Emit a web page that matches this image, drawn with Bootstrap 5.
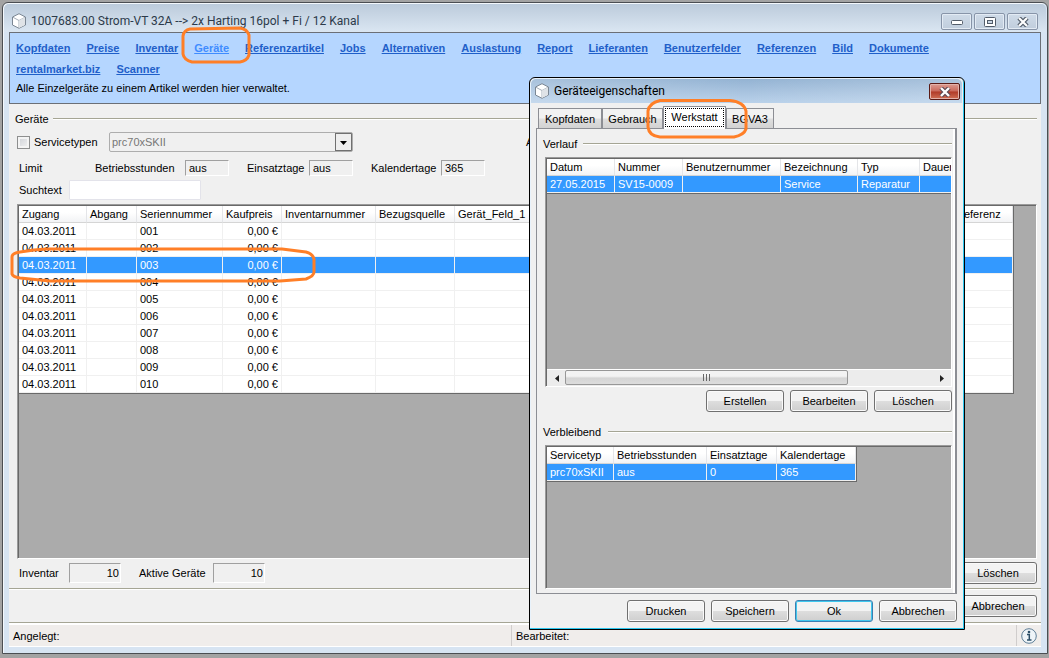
<!DOCTYPE html>
<html lang="de">
<head>
<meta charset="utf-8">
<meta name="viewport" content="width=device-width, initial-scale=1">
<title>1007683.00 Strom-VT 32A</title>
<link rel="stylesheet" href="https://cdn.jsdelivr.net/npm/bootstrap@5.3.0/dist/css/bootstrap.min.css">
<style>
  :root { --face:#f0f0f0; --frame:#d7e4f2; --hl:#3399ff; --mark-ink:#ff7f27; }
  body { background:#a3a3a3; color:#000; font:11px/16px "Liberation Sans", Arial, sans-serif; padding:2px 1px 4px 2px; }
  button, input, select { font:inherit; color:inherit; }
  .cap-font { font-family:Roboto, "Noto Sans", sans-serif; font-size:12px; }

  /* window frame */
  .win { background:var(--frame); border:1px solid #4b4e52; border-radius:6px 6px 0 0; padding:0 6px 6px; box-shadow:inset 1px 1px 0 #f4f8fc; }
  .win-title { height:28px; background:linear-gradient(#bccbdb,#dae6f2); margin:1px -5px 0; padding:5px 4px 0 7px; color:#2c3a4a; border-radius:5px 5px 0 0; }
  .cap-btns { column-gap:2px; }
  .cap-btn { width:31px; height:17px; padding:0; border:1px solid #8794a8; border-radius:2px; background:linear-gradient(#cfdbe8,#c0cddc); box-shadow:inset 0 0 0 1px #e3ebf4; display:flex; align-items:center; justify-content:center; }
  .links-panel { background:#b5d6ff; border:1px solid #6b6f76; padding:5px 6px; height:72px; }
  .links-row { column-gap:16px; padding-right:24px; }
  .links-panel a { color:#1f5fc9; font-weight:bold; line-height:21px; }
  .links-panel a.current { color:#3f8cff; }
  .client { background:var(--face); }
  .area { padding:7px 4px 0 8px; }

  .group-title { margin-left:-2px; }
  .group-line { height:2px; background:#a5a594; border-bottom:1px solid #fff; }
  .row-service { margin-top:5px; }
  .chk { appearance:none; width:13px; height:13px; margin:0; border:1px solid #8e8f8f; background:linear-gradient(135deg,#cdd0d5,#f4f4f4); box-shadow:inset 0 0 0 2px #f4f4f4; }
  .combo { width:244px; height:20px; padding:0 2px; border:1px solid #adadad; border-radius:2px; background:#f0f0f0 url("data:image/svg+xml,%3Csvg xmlns='http://www.w3.org/2000/svg' width='17' height='18'%3E%3Crect x='.5' y='.5' width='16' height='17' fill='%23eee' stroke='%23707070'/%3E%3Cpath d='M5 8h7l-3.500 4z' fill='%23000'/%3E%3C/svg%3E") no-repeat right center; color:#777; opacity:1; appearance:none; line-height:16px; }
  .sunk { width:44px; height:16px; padding:0 3px; border:1px solid; border-color:#a0a0a0 #fff #fff #a0a0a0; background:var(--face); border-radius:0; }
  .sunk-num { width:52px; height:20px; padding:0 1px; text-align:right; }
  .search { width:132px; height:20px; border:1px solid #e3e3ea; background:#fff; padding:0 3px; border-radius:1px; }
  .w-lab { width:76px; } .w-tage { width:62px; } .w-kal { width:70px; }

  .grid-box { background:#ababab; border:1px solid; border-color:#9a9a9a #fff #fff #9a9a9a; box-shadow:inset 1px 1px 0 #696969; padding:1px 0 0 1px; }
  .data { table-layout:fixed; border-collapse:separate; border-spacing:0; line-height:16px; border-right:1px solid #696969; border-bottom:1px solid #696969; background:#fff; }
  .data th { font-weight:normal; height:17px; padding:0 0 0 3px; background:linear-gradient(#fff 40%,#f2f3f5); border-bottom:1px solid #d5d5d5; border-right:1px solid #e4e5e8; white-space:nowrap; overflow:hidden; line-height:15px; }
  .data td { height:17px; padding:0 3px; border-right:1px solid #f0f0f0; border-bottom:1px solid #f0f0f0; white-space:nowrap; overflow:hidden; }
  .data tr.sel td { background:var(--hl); color:#fff; }
  .c50{width:50px}.c59{width:59px}.c60{width:60px}.c62{width:62px}.c67{width:67px}.c68{width:68px}.c70{width:70px}.c77{width:77px}.c79{width:79px}.c86{width:86px}.c93{width:93px}.c94{width:94px}.c98{width:98px}
  .main-data { width:calc(100% - 22px); }

  .push { width:78px; height:22px; padding:0; border:1px solid #707070; border-radius:3px; background:linear-gradient(#f3f3f3 48%,#dddddd 52%,#cfcfcf); box-shadow:inset 0 0 0 1px #fafafa; line-height:18px; }
  .push-default { border-color:#3c7fb1; box-shadow:inset 0 0 0 1px #3fc8ee; }
  .row-count { padding-top:3px; }
  .etch { height:2px; flex:none; background:#a5a594; border-bottom:1px solid #fff; }
  .row-cancel { padding:5px 4px; }
  .status { height:23px; background:#f0edeb; border-bottom:1px solid #fff; border-top:1px solid #fff; }
  .status > div { line-height:22px; }
  .sep { border-left:1px solid #d0cdcc; }

  /* dialog floats over the article window */
  .dlg { position:absolute; top:77px; right:84px; width:436px; border:1px solid #000; border-radius:6px 6px 0 0; background:var(--face); box-shadow:inset -1px -1px 0 #2cc6ee, inset 1px 1px 0 #e8f2fb; padding:0 7px 7px 6px; z-index:5; }
  .dlg-title { height:24px; margin:1px -5px 0; padding:4px 2px 0 3px; background:linear-gradient(90deg,#ffffff30,#ffffff00 50%,#ffffff30),linear-gradient(#94b3d3,#b9d1ea); border-radius:5px 5px 0 0; }
  .dlg-close { border-color:#5a1a15; background:linear-gradient(#dc9c92,#c9685a 48%,#b03a28 52%,#cf6f55); box-shadow:inset 0 0 0 1px #e3b2aa; }
  .tabs { padding:4px 0 0 2px; height:25px; }
  .tab { border:1px solid #8c8e94; border-bottom:0; background:linear-gradient(#f2f2f2 48%,#dfdfdf 52%,#d2d2d2); height:20px; padding:0; line-height:18px; }
  .tab.on { background:#fff; height:23px; margin-bottom:-1px; padding:1px 1px 2px; line-height:16px; z-index:1; }
  .tab.on > span { display:block; outline:1px dotted #000; outline-offset:-1px; height:19px; line-height:18px; }
  .page { border:1px solid #8c8e94; border-right:2px solid #8c8e94; background:var(--face); box-shadow:inset -2px 0 0 #fff; padding:7px 3px 4px 8px; }
  .lab-verlauf { width:40px; } .lab-rest { width:65px; }
  .box-history { height:230px; margin-top:5px; }
  .box-rest { height:144px; margin-top:5px; }
  .btn-row { gap:6px; margin-top:3px; }
  .row-rest { margin-top:12px; }
  .sb { height:17px; background:#ececec; border-top:1px solid #fff; }
  .sb-end { width:18px; display:flex; align-items:center; justify-content:center; }
  .thumb { width:283px; height:15px; border:1px solid #979797; border-radius:2px; background:linear-gradient(#f3f3f3 40%,#d5d5d5 55%,#dcdcdc); display:flex; align-items:center; justify-content:center; }

  /* hand-drawn highlights */
  .ring { position:absolute; pointer-events:none; fill:none; stroke:var(--mark-ink); stroke-width:3; stroke-linejoin:round; overflow:visible; z-index:4; }
  .ring-nav { left:-12px; top:-11px; }
  .ring-row { left:-7px; top:44px; }
  .ring-tab { left:-18px; top:-8px; }
</style>
</head>
<body class="vh-100 position-relative overflow-hidden">

<main class="win d-flex flex-column h-100">
  <header class="win-title d-flex cap-font">
    <svg width="16" height="16" viewBox="0 0 16 16" class="me-1 mt-1 flex-shrink-0"><path d="M8 .7 14.500 4v8L8 15.300 1.500 12V4z" fill="#fff" stroke="#7b8794"/><path d="M2 4.300 8 7.500l6-3.200M8 7.500V15" fill="none" stroke="#a5aeb8"/><path d="M8 7.500 14 4.300V12l-6 3z" fill="#dfe3e7"/></svg>
    <span class="flex-grow-1 mt-1">1007683.00 Strom-VT 32A --&gt; 2x Harting 16pol + Fi / 12 Kanal</span>
    <div class="cap-btns d-flex mt-1 pe-1">
      <button class="cap-btn" type="button" aria-label="Minimieren"><svg width="12" height="6"><rect x=".5" y="1.500" width="11" height="4" rx="1" fill="#fff" stroke="#525c69"/></svg></button>
      <button class="cap-btn" type="button" aria-label="Maximieren"><svg width="12" height="10"><rect x=".5" y=".5" width="11" height="9" rx="1" fill="#fff" stroke="#525c69"/><rect x="3.500" y="3.500" width="5" height="3" fill="#c8d4e2" stroke="#525c69"/></svg></button>
      <button class="cap-btn" type="button" aria-label="Schließen"><svg width="12" height="10" viewBox="0 0 12 10"><path d="M2 1l8 8M10 1l-8 8" stroke="#525c69" stroke-width="4.500"/><path d="M2 1l8 8M10 1l-8 8" stroke="#fff" stroke-width="2.200"/></svg></button>
    </div>
  </header>

  <nav class="links-panel">
    <div class="links-row d-flex flex-wrap">
      <a href="#">Kopfdaten</a><a href="#">Preise</a><a href="#">Inventar</a>
      <a href="#" class="current position-relative">Geräte<svg class="ring ring-nav" width="68" height="36"><path d="M8 2 58 1Q65 2 67 8V28Q65 34 58 35H10Q2 33 1 27V9Q2 3 8 2Z"/></svg></a>
      <a href="#">Referenzartikel</a><a href="#">Jobs</a><a href="#">Alternativen</a><a href="#">Auslastung</a><a href="#">Report</a><a href="#">Lieferanten</a><a href="#">Benutzerfelder</a><a href="#">Referenzen</a><a href="#">Bild</a><a href="#">Dokumente</a>
      <a href="#">rentalmarket.biz</a><a href="#">Scanner</a>
    </div>
    <div>Alle Einzelgeräte zu einem Artikel werden hier verwaltet.</div>
  </nav>

  <section class="client flex-grow-1 d-flex flex-column">
    <div class="area flex-grow-1 d-flex flex-column">
      <div class="group-title d-flex align-items-center"><span class="me-1">Geräte</span><div class="group-line flex-grow-1"></div></div>

      <div class="row-service d-flex align-items-center">
        <input class="chk" type="checkbox" id="st"><label for="st" class="ms-1" style="width:75px">Servicetypen</label>
        <select class="combo" aria-label="Servicetyp" disabled><option>prc70xSKII</option></select>
        <span style="margin-left:173px">A</span>
      </div>
      <div class="d-flex align-items-center mt-2 ps-1">
        <span class="w-lab" style="margin-left:-2px">Limit</span>
        <label for="f1" style="width:90px">Betriebsstunden</label><input class="sunk" id="f1" value="aus" readonly>
        <label for="f2" class="w-tage" style="margin-left:18px">Einsatztage</label><input class="sunk" id="f2" value="aus" readonly>
        <label for="f3" class="w-kal" style="margin-left:18px">Kalendertage</label><input class="sunk" id="f3" value="365" readonly>
      </div>
      <div class="d-flex align-items-center mt-1 mb-1">
        <label for="q" style="width:52px;padding-left:2px">Suchtext</label><input class="search" id="q" type="text">
      </div>

      <div class="position-relative flex-grow-1 d-flex">
        <div class="grid-box flex-grow-1 overflow-hidden">
          <table class="data main-data">
            <colgroup><col class="c68"><col class="c50"><col class="c86"><col class="c59"><col class="c94"><col class="c79"><col><col class="c60"></colgroup>
            <thead><tr><th>Zugang</th><th>Abgang</th><th>Seriennummer</th><th>Kaufpreis</th><th>Inventarnummer</th><th>Bezugsquelle</th><th>Gerät_Feld_1</th><th>Referenz</th></tr></thead>
            <tbody id="rows"></tbody>
          </table>
        </div>
        <svg class="ring ring-row" width="306" height="34"><path d="M24 2 10 4Q2 5 2 9V26Q3 29 10 30L40 33H270L296 31Q304 28 304 24V11Q303 6 296 4L272 1H36Z"/></svg>
      </div>

      <div class="row-count d-flex align-items-center">
        <label for="n1" style="width:52px;padding-left:2px">Inventar</label><input class="sunk sunk-num" id="n1" value="10" readonly>
        <label for="n2" style="width:92px;padding-left:18px">Aktive Geräte</label><input class="sunk sunk-num" id="n2" value="10" readonly>
        <button class="push ms-auto" type="button">Löschen</button>
      </div>
    </div>
    <div class="etch mt-1"></div>
    <div class="row-cancel d-flex justify-content-end"><button class="push" type="button">Abbrechen</button></div>
    <div class="etch"></div>
    <footer class="status d-flex">
      <div class="w-50 ps-1" style="margin-right:-14px">Angelegt:</div>
      <div class="sep flex-grow-1 ps-1">Bearbeitet:</div>
      <div class="sep px-1 d-flex align-items-center"><svg width="16" height="16" viewBox="0 0 16 16"><circle cx="8" cy="8" r="7.300" fill="#eef4f8" stroke="#5e7e96"/><circle cx="8" cy="4" r="1.300" fill="#2d4f68"/><path d="M6 6.500h2.300V12M6 12h4.500" fill="none" stroke="#2d4f68" stroke-width="1.500"/></svg></div>
    </footer>
  </section>
</main>

<section class="dlg" role="dialog" aria-labelledby="dt">
  <header class="dlg-title d-flex cap-font">
    <svg width="16" height="16" viewBox="0 0 16 16" class="me-1 flex-shrink-0"><path d="M8 .7 14.500 4v8L8 15.300 1.500 12V4z" fill="#fff" stroke="#7b8794"/><path d="M2 4.300 8 7.500l6-3.200M8 7.500V15" fill="none" stroke="#a5aeb8"/><path d="M8 7.500 14 4.300V12l-6 3z" fill="#dfe3e7"/></svg>
    <span id="dt" class="flex-grow-1">Geräteeigenschaften</span>
    <button class="cap-btn dlg-close" type="button" aria-label="Schließen"><svg width="12" height="10" viewBox="0 0 12 10"><path d="M2 1l8 8M10 1l-8 8" stroke="#5b4a55" stroke-width="4.500"/><path d="M2 1l8 8M10 1l-8 8" stroke="#fff" stroke-width="2.400"/></svg></button>
  </header>

  <div class="tabs d-flex align-items-end" role="tablist">
    <button class="tab" role="tab" type="button" style="width:64px">Kopfdaten</button>
    <button class="tab" role="tab" type="button" style="width:61px">Gebrauch</button>
    <button class="tab on position-relative" role="tab" type="button" style="width:63px"><span>Werkstatt</span><svg class="ring ring-tab" width="102" height="40"><path d="M14 1.500H84Q98 3 100 12V30Q98 36 88 38H14Q3 37 2 28V12Q3 4 14 1.500Z"/></svg></button>
    <button class="tab" role="tab" type="button" style="width:48px">BGVA3</button>
  </div>

  <div class="page" role="tabpanel">
    <div class="group-title d-flex align-items-center"><span class="lab-verlauf">Verlauf</span><div class="group-line flex-grow-1"></div></div>
    <div class="grid-box box-history d-flex flex-column overflow-hidden">
      <table class="data" style="width:440px">
        <colgroup><col class="c68"><col class="c68"><col class="c98"><col class="c77"><col class="c62"><col></colgroup>
        <thead><tr><th>Datum</th><th>Nummer</th><th>Benutzernummer</th><th>Bezeichnung</th><th>Typ</th><th>Dauer</th></tr></thead>
        <tbody><tr class="sel"><td>27.05.2015</td><td>SV15-0009</td><td></td><td>Service</td><td>Reparatur</td><td></td></tr></tbody>
      </table>
      <div class="sb d-flex mt-auto">
        <div class="sb-end"><svg width="5" height="7"><path d="M5 0v7L1 3.500z" fill="#222"/></svg></div>
        <div class="thumb"><svg width="9" height="7"><path d="M1.500 0v7M4.500 0v7M7.500 0v7" stroke="#666"/></svg></div>
        <div class="sb-end ms-auto"><svg width="5" height="7"><path d="M0 0v7l4-3.500z" fill="#222"/></svg></div>
      </div>
    </div>
    <div class="btn-row d-flex justify-content-end">
      <button class="push" type="button">Erstellen</button><button class="push" type="button">Bearbeiten</button><button class="push" type="button">Löschen</button>
    </div>
    <div class="group-title row-rest d-flex align-items-center"><span class="lab-rest">Verbleibend</span><div class="group-line flex-grow-1"></div></div>
    <div class="grid-box box-rest">
      <table class="data" style="width:310px">
        <colgroup><col class="c67"><col class="c93"><col class="c70"><col></colgroup>
        <thead><tr><th>Servicetyp</th><th>Betriebsstunden</th><th>Einsatztage</th><th>Kalendertage</th></tr></thead>
        <tbody><tr class="sel"><td>prc70xSKII</td><td>aus</td><td>0</td><td>365</td></tr></tbody>
      </table>
    </div>
  </div>

  <div class="d-flex justify-content-end" style="gap:6px;padding-top:6px">
    <button class="push" type="button">Drucken</button><button class="push" type="button">Speichern</button><button class="push push-default" type="button">Ok</button><button class="push" type="button">Abbrechen</button>
  </div>
</section>

<script src="https://cdn.jsdelivr.net/npm/bootstrap@5.3.0/dist/js/bootstrap.bundle.min.js"></script>
<script>
  const body = document.getElementById('rows');
  for (let i = 1; i <= 10; i++) {
    const tr = document.createElement('tr');
    if (i === 3) tr.className = 'sel';
    tr.innerHTML = '<td>04.03.2011</td><td></td><td>' + String(i).padStart(3, '0') +
      '</td><td class="text-end">0,00 €</td><td></td><td></td><td></td><td></td>';
    body.appendChild(tr);
  }
</script>
</body>
</html>
